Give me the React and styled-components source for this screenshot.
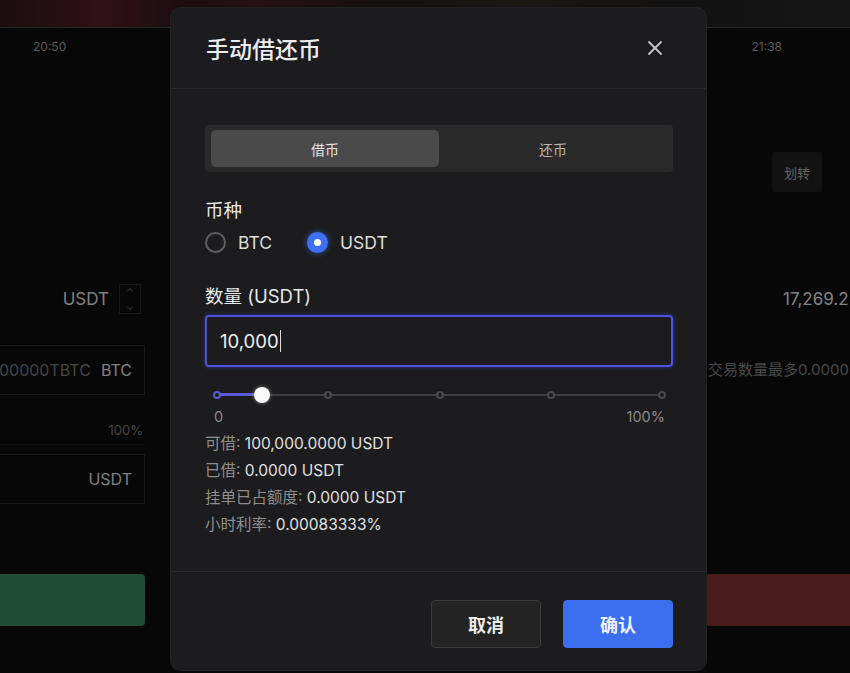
import React from "react";
import styled, { createGlobalStyle } from "styled-components";
import { X } from "lucide-react";

const GlobalStyle = createGlobalStyle`
  html, body {
    margin: 0;
    padding: 0;
    background: #070707;
  }
  body {
    font-family: "Inter", "Noto Sans CJK SC", sans-serif;
  }
  * {
    box-sizing: border-box;
  }
`;

/* ---------- trading page behind the dialog ---------- */

const Page = styled.div`
  position: relative;
  width: 850px;
  height: 673px;
  overflow: hidden;
  background: #0b0b0b;
  display: flex;
  flex-direction: column;
`;

const TopStrip = styled.div`
  height: 28px;
  flex-shrink: 0;
  border-bottom: 1px solid #3a3a3a;
  background: linear-gradient(
    90deg,
    #2a1418 0%,
    #4a1a22 12%,
    #2a1418 22%,
    #3a1a20 30%,
    #201818 45%,
    #2a2418 60%,
    #1c1c1c 80%,
    #202020 100%
  );
`;

const TimeRow = styled.div`
  height: 36px;
  flex-shrink: 0;
  display: flex;
  justify-content: space-between;
  align-items: center;
  padding: 0 68px 0 33px;
  font-size: 12px;
  color: #8c8c8c;
`;

const Main = styled.div`
  flex: 1;
  display: grid;
  grid-template-columns: 145px 1fr 144px;
`;

const SideCol = styled.div`
  display: flex;
  flex-direction: column;
  align-items: stretch;
  overflow: hidden;
`;

const InputRow = styled.div`
  margin-top: ${(p) => p.$top}px;
  height: ${(p) => p.$h || 50}px;
  display: flex;
  align-items: center;
  justify-content: flex-end;
  gap: 10px;
  padding-right: ${(p) => p.$pr || 12}px;
  border: ${(p) => (p.$boxed ? "1px solid #262626" : "none")};
  border-left: none;
  font-size: ${(p) => p.$size || 16}px;
  color: #c4c4c4;
  white-space: nowrap;
`;

const DimText = styled.span`
  color: #6a6a6a;
`;

const Stepper = styled.span`
  display: flex;
  flex-direction: column;
  align-items: center;
  width: 22px;
  font-size: 10px;
  line-height: 14px;
  color: #555;
  border: 1px solid #262626;
`;

const Percent = styled.div`
  margin-top: 20px;
  height: 30px;
  display: flex;
  align-items: center;
  justify-content: flex-end;
  padding-right: 2px;
  font-size: 13px;
  color: #6e6e6e;
  border-bottom: 1px solid #1e1e1e;
`;

const TradeButton = styled.div`
  margin-top: ${(p) => p.$top}px;
  height: 52px;
  border-radius: ${(p) => (p.$side === "left" ? "0 4px 4px 0" : "4px 0 0 4px")};
  background: ${(p) => (p.$side === "left" ? "#307253" : "#742b2b")};
`;

const TransferButton = styled.div`
  align-self: flex-end;
  margin: 88px 28px 0 0;
  width: 50px;
  height: 40px;
  display: flex;
  align-items: center;
  justify-content: center;
  background: #1c1c1c;
  border-radius: 3px;
  font-size: 13px;
  color: #9a9a9a;
`;

const SideLine = styled.div`
  margin-top: ${(p) => p.$top}px;
  height: 28px;
  display: flex;
  align-items: center;
  padding-left: ${(p) => p.$pl}px;
  font-size: ${(p) => p.$size || 15}px;
  color: ${(p) => p.$color || "#c8c8c8"};
  white-space: nowrap;
`;

/* ---------- dialog ---------- */

const Overlay = styled.div`
  position: absolute;
  inset: 0;
  background: rgba(0, 0, 0, 0.35);
  display: flex;
  align-items: flex-start;
  padding: 8px 0 0 171px;
`;

const Modal = styled.div`
  width: 535px;
  height: 662px;
  background: #1c1c1e;
  border-radius: 10px;
  display: flex;
  flex-direction: column;
  box-shadow: 0 0 0 1px #222;
`;

const Header = styled.div`
  height: 81px;
  flex-shrink: 0;
  display: flex;
  align-items: center;
  justify-content: space-between;
  padding: 0 39px 0 35px;
  border-bottom: 1px solid #2a2a2c;
`;

const Title = styled.h2`
  margin: 0;
  font-size: 23px;
  font-weight: 500;
  color: #ededed;
`;

const CloseButton = styled.button`
  background: none;
  border: none;
  padding: 0;
  display: flex;
  color: #c4c4c4;
  cursor: pointer;
`;

const Body = styled.div`
  flex: 1;
  display: flex;
  flex-direction: column;
  padding: 36px 33px 0 34px;
`;

const Tabs = styled.div`
  height: 47px;
  display: grid;
  grid-template-columns: 1fr 1fr;
  padding: 5px 6px;
  background: #2a2a2b;
  border-radius: 4px;
`;

const Tab = styled.div`
  display: flex;
  align-items: center;
  justify-content: center;
  border-radius: 5px;
  font-size: 14px;
  background: ${(p) => (p.$active ? "#4a4a4b" : "transparent")};
  color: ${(p) => (p.$active ? "#e6e6e6" : "#b4b4b4")};
`;

const Label = styled.div`
  margin-top: ${(p) => p.$top}px;
  font-size: 18.5px;
  line-height: 24px;
  color: #e8e8e8;
`;

const RadioRow = styled.div`
  margin-top: 9px;
  height: 22px;
  display: flex;
  align-items: center;
  gap: 35px;
`;

const RadioOption = styled.label`
  display: flex;
  align-items: center;
  gap: 12px;
  font-size: 17.5px;
  color: #dedede;
`;

const RadioCircle = styled.span`
  width: 21px;
  height: 21px;
  border-radius: 50%;
  display: flex;
  align-items: center;
  justify-content: center;
  border: ${(p) => (p.$checked ? "none" : "2px solid #5e5e5e")};
  background: ${(p) => (p.$checked ? "#3f6ff2" : "transparent")};
  box-shadow: ${(p) => (p.$checked ? "0 0 6px rgba(70, 110, 255, 0.6)" : "none")};

  &::after {
    content: "";
    display: ${(p) => (p.$checked ? "block" : "none")};
    width: 7px;
    height: 7px;
    border-radius: 50%;
    background: #fff;
  }
`;

const Field = styled.div`
  margin-top: 7px;
  height: 52px;
  display: flex;
  align-items: center;
  padding-left: 13px;
  border: 2px solid #4c50e4;
  border-radius: 4px;
  box-shadow: 0 0 4px rgba(80, 90, 240, 0.45);
  font-size: 18.5px;
  color: #f0f0f0;
`;

const Caret = styled.span`
  width: 1px;
  height: 22px;
  margin-left: 1px;
  background: #dcdcdc;
`;

const SliderWrap = styled.div`
  margin-top: 21px;
  padding: 0 11px 0 12px;
`;

const Track = styled.div`
  position: relative;
  height: 14px;
  display: flex;
  align-items: center;

  &::before {
    content: "";
    flex: 1;
    height: 2px;
    background: #3e3e3f;
  }
`;

const Fill = styled.div`
  position: absolute;
  left: 0;
  top: 5px;
  height: 3px;
  background: #5a5ad8;
`;

const Mark = styled.span`
  position: absolute;
  top: 3px;
  width: 8px;
  height: 8px;
  margin-left: -4px;
  border-radius: 50%;
  background: #1c1c1e;
  border: 2px solid ${(p) => (p.$on ? "#5a5ad8" : "#4a4a4a")};
`;

const Thumb = styled.span`
  position: absolute;
  top: -1px;
  width: 16px;
  height: 16px;
  margin-left: -8px;
  border-radius: 50%;
  background: #fafafa;
  box-shadow: 0 0 4px rgba(255, 255, 255, 0.4);
`;

const SliderLabels = styled.div`
  margin-top: 7px;
  display: flex;
  justify-content: space-between;
  padding: 0 8px 0 9px;
  font-size: 14.5px;
  line-height: 16px;
  color: #8a8a8a;
`;

const InfoList = styled.div`
  margin-top: 5px;
  display: flex;
  flex-direction: column;
`;

const InfoLine = styled.div`
  font-size: 15.5px;
  line-height: 27px;
  color: #e0e0e0;

  span {
    color: #8e8e8e;
  }
`;

const Footer = styled.div`
  height: 99px;
  flex-shrink: 0;
  display: flex;
  justify-content: flex-end;
  align-items: flex-start;
  gap: 22px;
  padding: 28px 33px 0 0;
  border-top: 1px solid #2a2a2c;
`;

const Button = styled.button`
  width: 110px;
  height: 48px;
  border-radius: 4px;
  font-family: inherit;
  font-size: 18px;
  font-weight: 600;
  cursor: pointer;
  border: 1px solid ${(p) => (p.$primary ? "#3b6ff0" : "#3a3a3a")};
  background: ${(p) => (p.$primary ? "#3b6ff0" : "#232324")};
  color: ${(p) => (p.$primary ? "#eef2ff" : "#ececec")};
`;

const App = () => {
  const marks = [0, 25, 50, 75, 100];
  const pct = 10;
  const info = [
    ["可借: ", "100,000.0000 USDT"],
    ["已借: ", "0.0000 USDT"],
    ["挂单已占额度: ", "0.0000 USDT"],
    ["小时利率: ", "0.00083333%"],
  ];

  return (
    <>
      <GlobalStyle />
      <Page>
        <TopStrip />
        <TimeRow>
          <span>20:50</span>
          <span>21:38</span>
        </TimeRow>
        <Main>
          <SideCol>
            <InputRow $top={206} $h={58} $pr={4} $size={17}>
              USDT
              <Stepper>
                <span>⌃</span>
                <span>⌄</span>
              </Stepper>
            </InputRow>
            <InputRow $top={17} $boxed>
              <DimText>00000TBTC</DimText>
              BTC
            </InputRow>
            <Percent>100%</Percent>
            <InputRow $top={9} $boxed>
              USDT
            </InputRow>
            <TradeButton $top={70} $side="left" />
          </SideCol>
          <div />
          <SideCol>
            <TransferButton>划转</TransferButton>
            <SideLine $top={93} $pl={77} $size={17}>17,269.2</SideLine>
            <SideLine $top={41} $pl={2} $size={15} $color="#707070">
              交易数量最多0.0000
            </SideLine>
            <TradeButton $top={192} $side="right" />
          </SideCol>
        </Main>

        <Overlay>
          <Modal>
            <Header>
              <Title>手动借还币</Title>
              <CloseButton aria-label="close">
                <X size={24} strokeWidth={1.8} />
              </CloseButton>
            </Header>
            <Body>
              <Tabs>
                <Tab $active>借币</Tab>
                <Tab>还币</Tab>
              </Tabs>

              <Label $top={26}>币种</Label>
              <RadioRow>
                <RadioOption>
                  <RadioCircle />
                  BTC
                </RadioOption>
                <RadioOption>
                  <RadioCircle $checked />
                  USDT
                </RadioOption>
              </RadioRow>

              <Label $top={31}>数量 (USDT)</Label>
              <Field>
                10,000
                <Caret />
              </Field>

              <SliderWrap>
                <Track>
                  <Fill style={{ width: `${pct}%` }} />
                  {marks.map((m) => (
                    <Mark key={m} $on={m <= pct} style={{ left: `${m}%` }} />
                  ))}
                  <Thumb style={{ left: `${pct}%` }} />
                </Track>
              </SliderWrap>
              <SliderLabels>
                <span>0</span>
                <span>100%</span>
              </SliderLabels>

              <InfoList>
                {info.map(([k, v]) => (
                  <InfoLine key={k}>
                    <span>{k}</span>
                    {v}
                  </InfoLine>
                ))}
              </InfoList>
            </Body>
            <Footer>
              <Button>取消</Button>
              <Button $primary>确认</Button>
            </Footer>
          </Modal>
        </Overlay>
      </Page>
    </>
  );
};

export default App;
